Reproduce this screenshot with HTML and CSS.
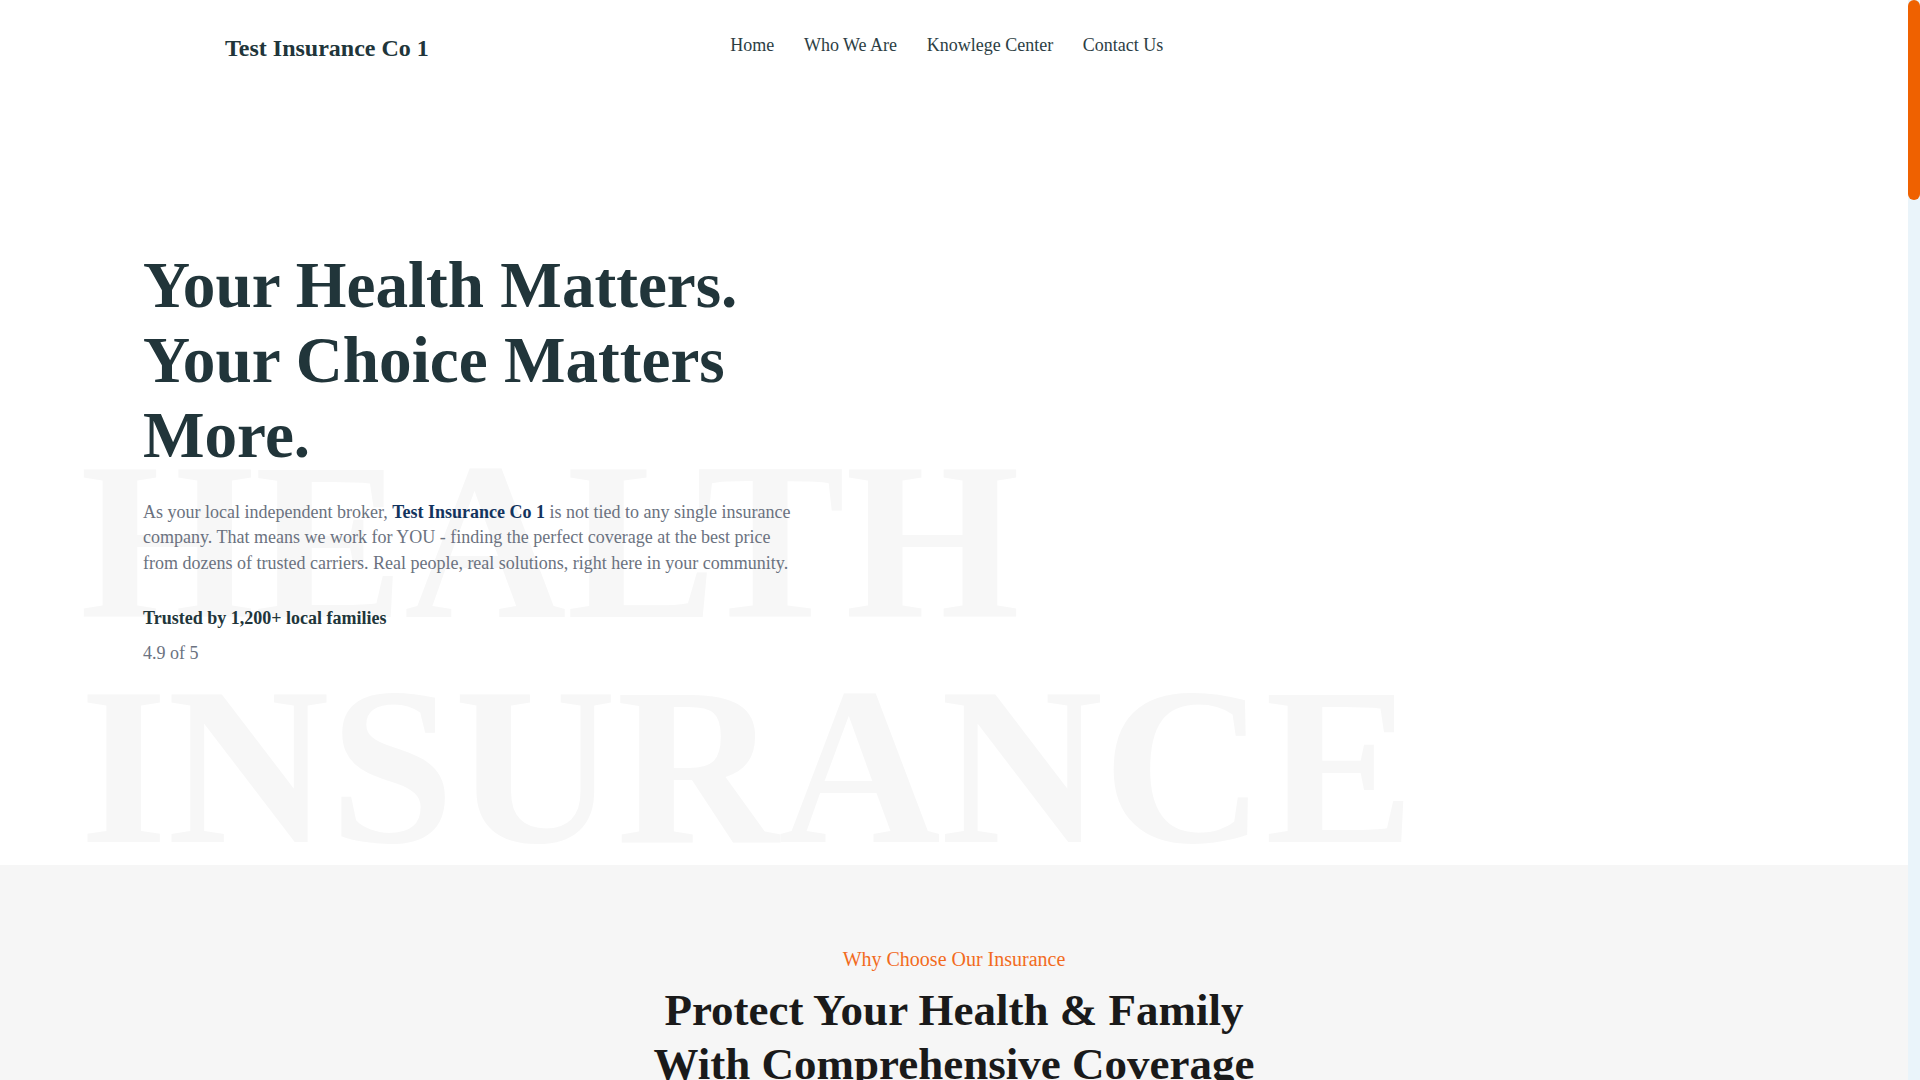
FILE: index.html
```html
<!DOCTYPE html>
<html lang="en">
<head>
<meta charset="utf-8">
<title>Test Insurance Co 1</title>
<link rel="stylesheet" href="styles.css">
</head>
<body>
<header class="site-header">
  <div class="brand">Test Insurance Co 1</div>
  <nav class="main-nav">
    <a href="#">Home</a>
    <a href="#">Who We Are</a>
    <a href="#">Knowlege Center</a>
    <a href="#">Contact Us</a>
  </nav>
</header>
<section class="hero">
  <div class="watermark" aria-hidden="true">HEALTH<br>INSURANCE</div>
  <div class="hero-content">
    <h1 class="hero-title">Your Health Matters. Your Choice Matters More.</h1>
    <p class="hero-text">As your local independent broker, <strong class="hl">Test Insurance Co 1</strong> is not tied to any single insurance company. That means we work for YOU - finding the perfect coverage at the best price from dozens of trusted carriers. Real people, real solutions, right here in your community.</p>
    <div class="trust">Trusted by 1,200+ local families</div>
    <div class="rating">4.9 of 5</div>
  </div>
</section>
<section class="why">
  <p class="eyebrow">Why Choose Our Insurance</p>
  <h2 class="why-title">Protect Your Health &amp; Family With Comprehensive Coverage</h2>
</section>
<div class="scrollbar" aria-hidden="true"><div class="scrollbar-thumb"></div></div>
</body>
</html>
```
FILE: styles.css
```css
html, body {
  margin: 0;
  padding: 0;
}
html {
  scrollbar-width: none;
}
html::-webkit-scrollbar {
  display: none;
}
body {
  font-family: "Liberation Serif", "Times New Roman", serif;
  background: #ffffff;
  color: #21353a;
  padding-right: 12px;
}
.scrollbar {
  position: fixed;
  top: 0;
  right: 0;
  width: 12px;
  height: 100vh;
  background: #eaf4fa;
  z-index: 10;
}
.scrollbar-thumb {
  width: 12px;
  height: 200px;
  background: #ef6100;
  border-radius: 6px;
}
.site-header {
  display: flex;
  align-items: flex-start;
  height: 100px;
  box-sizing: border-box;
  padding: 35px 0 0 225px;
}
.brand {
  font-size: 24px;
  font-weight: 700;
  color: #21353a;
}
.main-nav {
  display: flex;
  gap: 29.6px;
  margin-left: 301.5px;
}
.main-nav a {
  font-size: 18px;
  color: #2c3e44;
  text-decoration: none;
}
.hero {
  position: relative;
  height: 765px;
  box-sizing: border-box;
  padding: 148px 0 0 143px;
  overflow: hidden;
}
.watermark {
  position: absolute;
  left: 80px;
  top: 329px;
  font-size: 224.5px;
  line-height: 225px;
  font-weight: 700;
  color: #f7f7f7;
  white-space: nowrap;
  z-index: 0;
}
.hero-content {
  position: relative;
  z-index: 1;
  max-width: 660px;
}
.hero-title {
  margin: 0;
  font-size: 65.2px;
  line-height: 75px;
  font-weight: 700;
  color: #21353a;
}
.hero-text {
  margin: 26.5px 0 0;
  font-size: 18px;
  line-height: 25.7px;
  color: #6b7280;
}
.hl {
  color: #13345e;
}
.trust {
  margin-top: 31px;
  font-size: 18px;
  font-weight: 700;
  color: #21353a;
}
.rating {
  margin-top: 14px;
  font-size: 18px;
  color: #6b7280;
}
.why {
  background: #f6f6f6;
  height: 4965px;
  box-sizing: border-box;
  padding-top: 83px;
  text-align: center;
}
.eyebrow {
  margin: 0;
  font-size: 20px;
  color: #f26b1d;
}
.why-title {
  margin: 12px auto 0;
  max-width: 640px;
  font-size: 45px;
  line-height: 1.2;
  font-weight: 700;
  color: #1a1a1a;
}
```
